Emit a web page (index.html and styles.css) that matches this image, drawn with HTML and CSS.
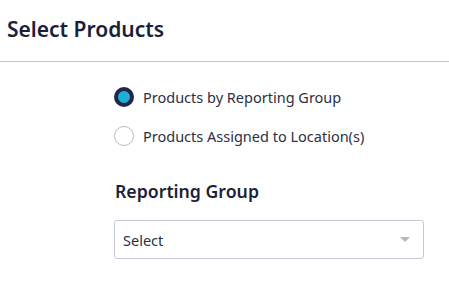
FILE: index.html
```html
<!DOCTYPE html>
<html>
<head>
<meta charset="utf-8">
<link rel="stylesheet" href="styles.css">
</head>
<body>
<div class="header"><h1 class="title">Select Products</h1></div>
<div class="content">
  <div class="radios">
    <label class="radio-row"><span class="radio checked"></span><span class="radio-label">Products by Reporting Group</span></label>
    <label class="radio-row"><span class="radio"></span><span class="radio-label">Products Assigned to Location(s)</span></label>
  </div>
  <h2 class="section-title">Reporting Group</h2>
  <div class="select"><span class="select-text">Select</span><span class="caret"></span></div>
</div>
</body>
</html>
```
FILE: styles.css
```css
* { box-sizing: border-box; }
body {
  margin: 0;
  background: #fff;
  font-family: "Noto Sans", "Open Sans", sans-serif;
  color: #2a2a3e;
}
.header {
  height: 62px;
  border-bottom: 1px solid #c6c4d6;
  padding: 15px 0 0 7px;
}
.title {
  margin: 0;
  font-size: 21px;
  font-weight: 600;
  line-height: 28px;
  color: #1d1f38;
}
.content {
  padding: 24px 0 0 114px;
}
.radios {
  display: flex;
  flex-direction: column;
  gap: 18px;
}
.radio-row {
  display: flex;
  align-items: center;
  gap: 9px;
  height: 21px;
}
.radio {
  width: 20px;
  height: 20px;
  border-radius: 50%;
  border: 1px solid #b9b8c8;
  background: #fff;
  flex: none;
}
.radio.checked {
  border: 4px solid #232746;
  background: #1bb0d6;
}
.radio-label {
  font-size: 14.5px;
  color: #2d2f45;
}
.section-title {
  margin: 33px 0 0 1px;
  font-size: 17.7px;
  font-weight: 600;
  line-height: 24px;
  color: #1d1f38;
}
.select {
  margin-top: 17px;
  width: 310px;
  height: 39px;
  border: 1px solid #c9c7dc;
  border-radius: 3px;
  display: flex;
  align-items: center;
  justify-content: space-between;
  padding: 0 13px 0 8px;
}
.select-text {
  font-size: 14.5px;
  color: #2d2f45;
}
.caret {
  width: 0;
  height: 0;
  border-left: 5px solid transparent;
  border-right: 5px solid transparent;
  border-top: 5px solid #b6b4c6;
}
```
